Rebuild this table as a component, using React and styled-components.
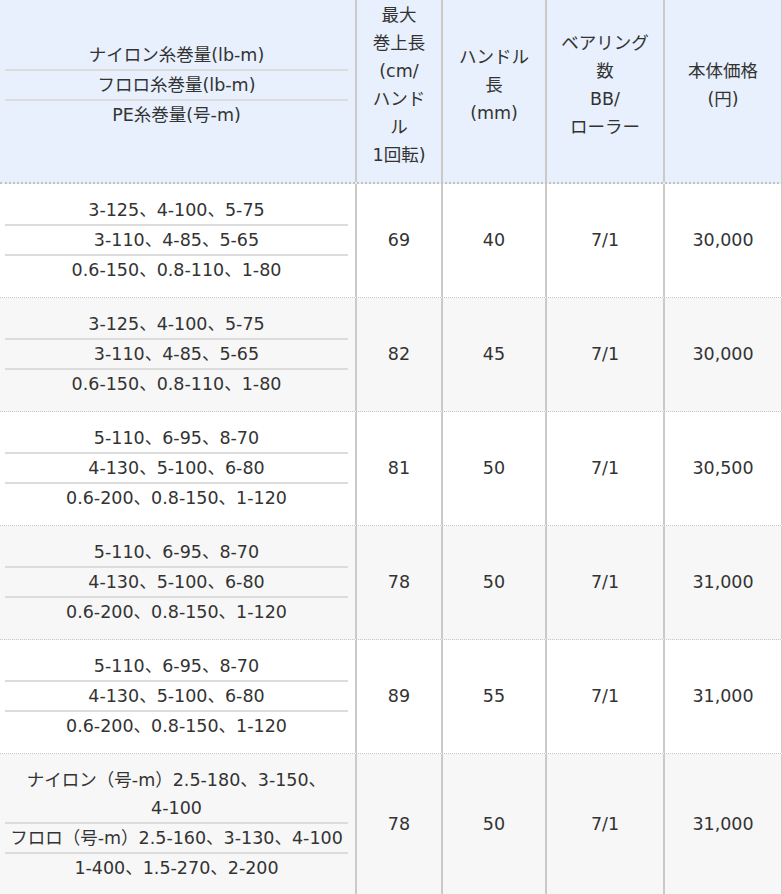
import styled, { createGlobalStyle } from "styled-components";

const GlobalStyle = createGlobalStyle`
  html, body {
    margin: 0;
    padding: 0;
    background: #ffffff;
  }
  body {
    font-family: "DejaVu Sans", "Noto Sans CJK JP", sans-serif;
    font-size: 17.5px;
    color: #333333;
  }
`;

const COLUMNS = "357px 86px 104px 118px 118px";

const Table = styled.div`
  width: 783px;
  overflow: hidden;
`;

const Row = styled.div`
  display: grid;
  grid-template-columns: ${COLUMNS};
  background-color: ${(p) => (p.$head ? "#e7f0fc" : p.$alt ? "#f7f7f7" : "#ffffff")};
  border-bottom: ${(p) => (p.$head ? "2px dotted #c2c2c2" : "1px dotted #c6c6c6")};
`;

const Cell = styled.div`
  display: flex;
  flex-direction: column;
  align-items: center;
  justify-content: center;
  text-align: center;
  line-height: 28px;
  border-right: 2px solid #ccc9c6;
  padding: ${(p) => (p.$head ? "1px 0 13px" : "12px 0 13px")};
`;

const SpecCell = styled(Cell)`
  align-items: stretch;
  padding-left: 5px;
  padding-right: 7px;
`;

const Line = styled.div`
  white-space: nowrap;
  & + & {
    border-top: 2px solid #dcdcdc;
  }
`;

const rows = [
  {
    specs: ["3-125、4-100、5-75", "3-110、4-85、5-65", "0.6-150、0.8-110、1-80"],
    length: "69",
    handle: "40",
    bearing: "7/1",
    price: "30,000",
  },
  {
    specs: ["3-125、4-100、5-75", "3-110、4-85、5-65", "0.6-150、0.8-110、1-80"],
    length: "82",
    handle: "45",
    bearing: "7/1",
    price: "30,000",
  },
  {
    specs: ["5-110、6-95、8-70", "4-130、5-100、6-80", "0.6-200、0.8-150、1-120"],
    length: "81",
    handle: "50",
    bearing: "7/1",
    price: "30,500",
  },
  {
    specs: ["5-110、6-95、8-70", "4-130、5-100、6-80", "0.6-200、0.8-150、1-120"],
    length: "78",
    handle: "50",
    bearing: "7/1",
    price: "31,000",
  },
  {
    specs: ["5-110、6-95、8-70", "4-130、5-100、6-80", "0.6-200、0.8-150、1-120"],
    length: "89",
    handle: "55",
    bearing: "7/1",
    price: "31,000",
  },
  {
    specs: [
      ["ナイロン（号-m）2.5-180、3-150、", "4-100"],
      "フロロ（号-m）2.5-160、3-130、4-100",
      "1-400、1.5-270、2-200",
    ],
    length: "78",
    handle: "50",
    bearing: "7/1",
    price: "31,000",
  },
];

const Stack = ({ lines }) =>
  lines.map((l, i) => (
    <span key={i} style={{ display: "block" }}>
      {l}
    </span>
  ));

const App = () => {
  return (
    <>
      <GlobalStyle />
      <Table>
        <Row $head>
          <SpecCell $head>
            <Line>ナイロン糸巻量(lb-m)</Line>
            <Line>フロロ糸巻量(lb-m)</Line>
            <Line>PE糸巻量(号-m)</Line>
          </SpecCell>
          <Cell $head>
            <Stack lines={["最大", "巻上長", "(cm/", "ハンド", "ル", "1回転)"]} />
          </Cell>
          <Cell $head>
            <Stack lines={["ハンドル", "長", "(mm)"]} />
          </Cell>
          <Cell $head>
            <Stack lines={["ベアリング", "数", "BB/", "ローラー"]} />
          </Cell>
          <Cell $head>
            <Stack lines={["本体価格", "(円)"]} />
          </Cell>
        </Row>
        {rows.map((r, i) => (
          <Row key={i} $alt={i % 2 === 1}>
            <SpecCell>
              {r.specs.map((s, j) => (
                <Line key={j}>{Array.isArray(s) ? <Stack lines={s} /> : s}</Line>
              ))}
            </SpecCell>
            <Cell>{r.length}</Cell>
            <Cell>{r.handle}</Cell>
            <Cell>{r.bearing}</Cell>
            <Cell>{r.price}</Cell>
          </Row>
        ))}
      </Table>
    </>
  );
};

export default App;
